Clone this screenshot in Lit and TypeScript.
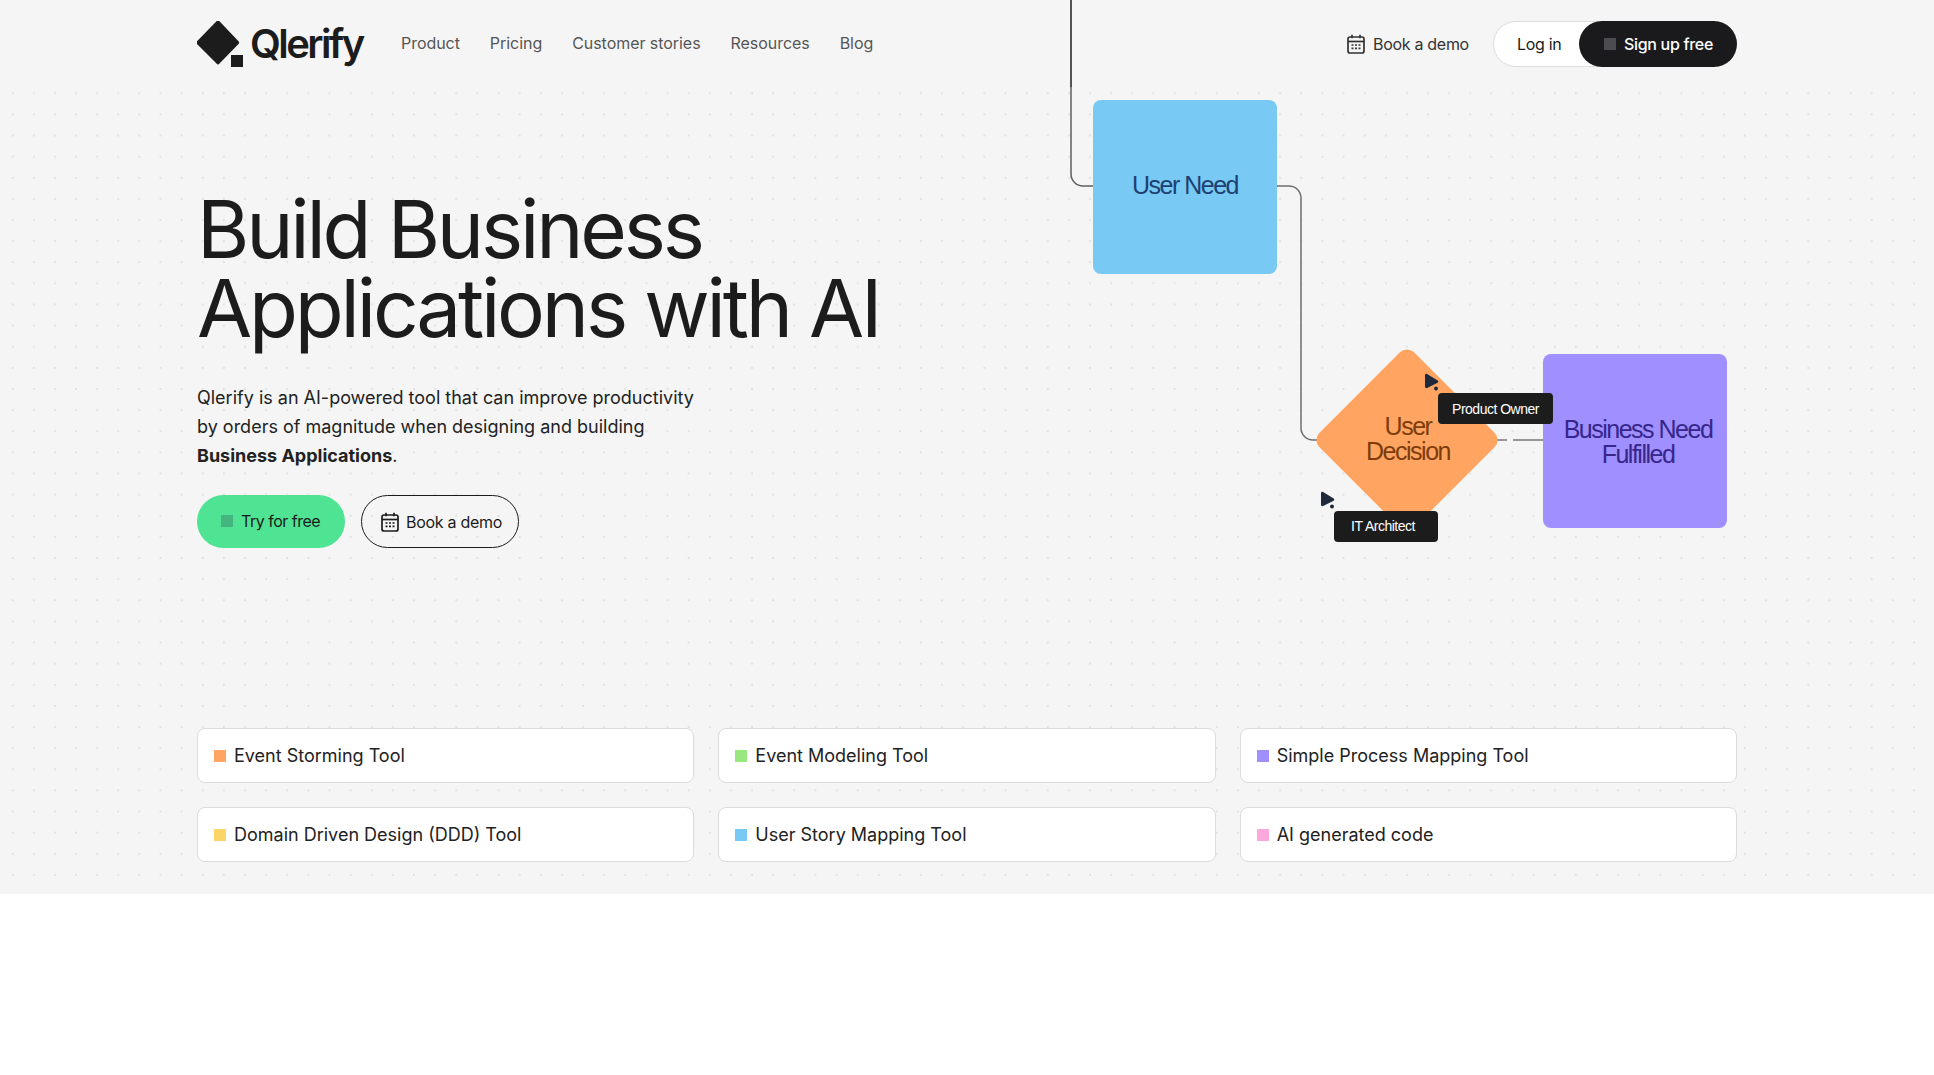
import { LitElement, css, html, svg } from 'lit';
import { customElement } from 'lit/decorators.js';

const tools = [
    { label: 'Event Storming Tool', color: '#ffa561' },
    { label: 'Event Modeling Tool', color: '#98e87f' },
    { label: 'Simple Process Mapping Tool', color: '#9f8fff' },
    { label: 'Domain Driven Design (DDD) Tool', color: '#fbd568' },
    { label: 'User Story Mapping Tool', color: '#78caf5' },
    { label: 'AI generated code', color: '#fba8dc' },
];

const navLinks = ['Product', 'Pricing', 'Customer stories', 'Resources', 'Blog'];

const calendar = () => html`<svg class="cal" width="18" height="20" viewBox="0 0 18 20" fill="none">
    <rect x="1" y="3" width="16" height="16" rx="2" stroke="currentColor" stroke-width="1.7"></rect>
    <path d="M1 7.5h16" stroke="currentColor" stroke-width="1.7"></path>
    <path d="M5 0.8v3.4M13 0.8v3.4" stroke="currentColor" stroke-width="1.7"></path>
    <path
        d="M4.5 10.2h2v1.6h-2zM8 10.2h2v1.6h-2zM11.5 10.2h2v1.6h-2zM4.5 13.6h2v1.6h-2zM8 13.6h2v1.6h-2zM11.5 13.6h2v1.6h-2z"
        fill="currentColor"
    ></path>
</svg>`;

const pointer = () => svg`<path d="M1 2.2c0-1.2 1.1-1.8 2.1-1.2l10.6 6.4c.9.6.8 1.8-.1 2.3L3.1 15c-1 .5-2.1-.2-2.1-1.3z" fill="#1e2a3c"></path>
    <circle cx="12" cy="15.5" r="2" fill="#1e2a3c"></circle>`;

@customElement('app-root')
export class AppRoot extends LitElement {
    render() {
        return html`
            <section class="hero">
                <header class="nav">
                    <div class="wrap nav-row">
                        <a class="logo">
                            <svg width="46" height="46" viewBox="0 0 46 46">
                                <path d="M20.5 1.2a2 2 0 0 1 3 0l19 20a2 2 0 0 1 0 2.8l-19 19.6a2 2 0 0 1-3 0L1 24a2 2 0 0 1 0-2.8z" transform="translate(-1 -1)" fill="#1c1c1c"></path>
                                <rect x="34" y="34" width="12" height="12" fill="#1c1c1c"></rect>
                            </svg>
                            <span>Qlerify</span>
                        </a>
                        <nav class="links">${navLinks.map((l) => html`<a>${l}</a>`)}</nav>
                        <div class="spacer"></div>
                        <a class="demo-link">${calendar()}<span>Book a demo</span></a>
                        <div class="auth">
                            <a class="login">Log in</a>
                            <a class="signup"><i></i>Sign up free</a>
                        </div>
                    </div>
                </header>

                <div class="wrap intro">
                    <h1>Build Business<br />Applications with AI</h1>
                    <p>
                        Qlerify is an AI-powered tool that can improve productivity<br />
                        by orders of magnitude when designing and building<br />
                        <b>Business Applications</b>.
                    </p>
                    <div class="cta">
                        <a class="try"><i></i>Try for free</a>
                        <a class="book">${calendar()}<span>Book a demo</span></a>
                    </div>
                </div>

                <div class="wrap grid">
                    ${tools.map(
                        (t) => html`<div class="tool"><i style="background:${t.color}"></i>${t.label}</div>`
                    )}
                </div>

                <div class="canvas">
                    <svg class="wires" width="1934" height="894" fill="none">
                        <path d="M1071 0V87" stroke="#1c1c1c" stroke-width="1.5"></path>
                        <path d="M1071 87V174a12 12 0 0 0 12 12H1093" stroke="#5f5f5f" stroke-width="1.5"></path>
                        <path d="M1277 186H1289a12 12 0 0 1 12 12V428a12 12 0 0 0 12 12H1320" stroke="#6f6f6f" stroke-width="1.5"></path>
                        <path d="M1495 440H1507M1513 440H1544" stroke="#777" stroke-width="1.5"></path>
                    </svg>
                    <div class="node need">User Need</div>
                    <div class="diamond"></div>
                    <div class="diamond-label">User<br />Decision</div>
                    <div class="node fulfilled"><span>Business Need<br />Fulfilled</span></div>
                    <svg class="cursor c1" width="16" height="18" viewBox="0 0 16 18">${pointer()}</svg>
                    <svg class="cursor c2" width="16" height="18" viewBox="0 0 16 18">${pointer()}</svg>
                    <div class="tag owner">Product Owner</div>
                    <div class="tag architect">IT Architect</div>
                </div>
            </section>
        `;
    }

    static styles = css`
        :host {
            display: block;
            min-height: 1075px;
            background: #fff;
            font-family: Inter, 'Liberation Sans', sans-serif;
            color: #1c1c1c;
        }
        .hero {
            position: relative;
            height: 894px;
            background-color: #f5f5f5;
            background-image: radial-gradient(circle, #e2e2e2 1px, transparent 1.3px);
            background-size: 21.13px 21.13px;
            background-position: 2.1px 82.7px;
            overflow: hidden;
        }
        .wrap {
            width: 1540px;
            margin: 0 auto;
        }
        .nav {
            height: 88px;
            background: #f5f5f5;
        }
        .nav-row {
            display: flex;
            align-items: center;
            height: 87px;
        }
        .logo {
            display: flex;
            align-items: center;
            gap: 7px;
            width: 204px;
            font-size: 40px;
            font-weight: 600;
            letter-spacing: -2.6px;
        }
        .links {
            display: flex;
            gap: 30px;
            padding-bottom: 1px;
            font-size: 16px;
            letter-spacing: -0.05px;
            color: #555;
        }
        .spacer {
            flex: 1;
        }
        .demo-link {
            display: flex;
            align-items: center;
            gap: 8px;
            font-size: 16px;
            letter-spacing: -0.3px;
            margin-right: 24px;
            color: #333;
        }
        .auth {
            display: flex;
            height: 46px;
            font-size: 16px;
            letter-spacing: -0.3px;
        }
        .login {
            display: flex;
            align-items: center;
            width: 110px;
            padding-left: 23px;
            margin-right: -24px;
            box-sizing: border-box;
            background: #fff;
            border: 1px solid #ddd;
            border-radius: 23px 0 0 23px;
        }
        .signup {
            position: relative;
            z-index: 1;
            display: flex;
            align-items: center;
            gap: 8px;
            padding: 0 24px 0 25px;
            border-radius: 23px;
            background: #1a1a1d;
            color: #fff;
            font-weight: 500;
        }
        .signup i {
            width: 12px;
            height: 12px;
            background: #4b4b50;
        }
        .intro {
            padding-top: 101px;
        }
        h1 {
            margin: 0;
            font-size: 80px;
            font-weight: 400;
            line-height: 79px;
            letter-spacing: -3.2px;
            color: #1c1c1c;
        }
        p {
            margin: 36px 0 0;
            font-size: 18px;
            line-height: 29px;
            color: #222;
        }
        b {
            font-weight: 700;
        }
        .cta {
            display: flex;
            gap: 16px;
            margin-top: 25px;
        }
        .cta a {
            display: flex;
            align-items: center;
            height: 53px;
            box-sizing: border-box;
            border-radius: 27px;
            font-size: 16px;
        }
        .try {
            gap: 8px;
            padding: 0 25px 2px 24px;
            background: #4fe394;
            letter-spacing: -0.5px;
        }
        .try i {
            width: 12px;
            height: 12px;
            background: #45b57f;
        }
        .book {
            gap: 7px;
            padding: 0 16px 0 19px;
            border: 1.5px solid #1c1c1c;
            letter-spacing: -0.3px;
        }
        .grid {
            display: grid;
            grid-template-columns: repeat(3, 1fr);
            gap: 24px;
            margin-top: 180px;
        }
        .tool {
            display: flex;
            align-items: center;
            gap: 8px;
            height: 55px;
            box-sizing: border-box;
            padding-left: 16px;
            background: #fff;
            border: 1px solid #dcdcdc;
            border-radius: 8px;
            font-size: 18px;
            color: #222;
        }
        .tool i {
            width: 12px;
            height: 12px;
        }
        .canvas {
            position: absolute;
            inset: 0;
            pointer-events: none;
        }
        .wires {
            position: absolute;
            left: 0;
            top: 0;
        }
        .node {
            position: absolute;
            display: flex;
            align-items: center;
            justify-content: center;
            width: 184px;
            height: 174px;
            box-sizing: border-box;
            border-radius: 8px;
            text-align: center;
            font-family: 'Liberation Sans', Inter, sans-serif;
            font-size: 25px;
            line-height: 25px;
            letter-spacing: -1.5px;
        }
        .need {
            left: 1093px;
            top: 100px;
            padding-bottom: 3px;
            background: #78caf5;
            color: #1c4170;
        }
        .fulfilled {
            left: 1543px;
            top: 354px;
            padding-top: 2px;
            background: #9f8fff;
            color: #36268c;
        }
        .fulfilled span {
            margin-left: 6px;
        }
        .diamond {
            position: absolute;
            left: 1340px;
            top: 373px;
            width: 134px;
            height: 134px;
            border-radius: 10px;
            background: #ffa561;
            transform: rotate(45deg);
        }
        .diamond-label {
            position: absolute;
            left: 1318px;
            top: 414px;
            width: 180px;
            text-align: center;
            font-family: 'Liberation Sans', Inter, sans-serif;
            font-size: 25px;
            line-height: 25px;
            letter-spacing: -1.5px;
            color: #7e3c0c;
        }
        .tag {
            position: absolute;
            display: flex;
            align-items: center;
            justify-content: center;
            height: 31px;
            box-sizing: border-box;
            border-radius: 4px;
            background: #1c1c1c;
            color: #fff;
            font-family: 'Liberation Sans', Inter, sans-serif;
            font-size: 14px;
            letter-spacing: -0.5px;
        }
        .owner {
            left: 1438px;
            top: 393px;
            width: 115px;
        }
        .architect {
            left: 1334px;
            top: 511px;
            width: 104px;
            padding: 0 6px 2px 0;
        }
        .cursor {
            position: absolute;
        }
        .c1 {
            left: 1424px;
            top: 373px;
        }
        .c2 {
            left: 1320px;
            top: 491px;
        }
    `;
}
